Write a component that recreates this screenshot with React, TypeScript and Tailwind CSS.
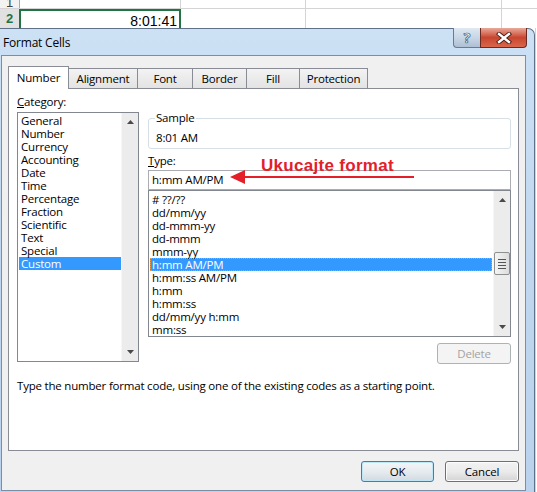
import React from "react";

const categories = [
  "General",
  "Number",
  "Currency",
  "Accounting",
  "Date",
  "Time",
  "Percentage",
  "Fraction",
  "Scientific",
  "Text",
  "Special",
  "Custom",
];

const formats = [
  "# ??/??",
  "dd/mm/yy",
  "dd-mmm-yy",
  "dd-mmm",
  "mmm-yy",
  "h:mm AM/PM",
  "h:mm:ss AM/PM",
  "h:mm",
  "h:mm:ss",
  "dd/mm/yy h:mm",
  "mm:ss",
];

const tabs = [
  { label: "Number", w: "w-[61px]" },
  { label: "Alignment", w: "w-[69px]" },
  { label: "Font", w: "w-[55px]" },
  { label: "Border", w: "w-[54px]" },
  { label: "Fill", w: "w-[53px]" },
  { label: "Protection", w: "w-[68px]" },
];

function Arrow({ down }: { down?: boolean }) {
  return (
    <svg width="7" height="4" viewBox="0 0 7 4">
      <polygon points={down ? "0,0 7,0 3.5,4" : "0,4 7,4 3.5,0"} fill="#4a4a4a" />
    </svg>
  );
}

function ScrollBar({ thumb }: { thumb?: boolean }) {
  return (
    <div className="relative w-[17px] h-full shrink-0 bg-[#ececec] border-l border-[#f6f6f6] flex flex-col items-center justify-between pt-[7px] pb-[7px]">
      <Arrow />
      <Arrow down />
      {thumb && (
        <div className="absolute left-0 right-0 top-[61px] h-[23px] rounded-[2px] border border-[#8e8f8f] bg-gradient-to-r from-[#f5f5f5] to-[#dcdcdc] flex flex-col items-center justify-center gap-[2px]">
          <div className="w-[8px] h-[1px] bg-[#555]" />
          <div className="w-[8px] h-[1px] bg-[#555]" />
          <div className="w-[8px] h-[1px] bg-[#555]" />
          <div className="w-[8px] h-[1px] bg-[#555]" />
        </div>
      )}
    </div>
  );
}

function ExcelStrip() {
  return (
    <div className="h-[28px] shrink-0 font-['Liberation_Sans',sans-serif] text-[#222] tracking-normal">
      {/* row 1 */}
      <div className="flex h-[9px] border-b border-[#d4d4d4]">
        <div className="w-[20px] bg-[#f3f3f3] border-r border-[#ababab] flex items-end justify-center overflow-hidden">
          <span className="text-[13px] leading-[13px] -mb-[1px] text-[#444]">1</span>
        </div>
        <div className="w-[161px] border-r border-[#d4d4d4]" />
        <div className="w-[125px] border-r border-[#d4d4d4]" />
        <div className="w-[196px] border-r border-[#d4d4d4]" />
        <div className="flex-1" />
      </div>
      {/* row 2 */}
      <div className="flex h-[19px]">
        <div className="w-[20px] bg-[#e1e1e1] border-r border-[#ababab] flex items-center justify-center">
          <span className="text-[13px] font-bold text-[#217346]">2</span>
        </div>
        <div className="w-[162px] -ml-[1px] border-2 border-b-0 border-[#217346] flex items-center justify-end pr-[2px] pt-[2px]">
          <span className="text-[14px] leading-[16px] text-black">8:01:41</span>
        </div>
        <div className="w-[125px] border-r border-[#d4d4d4]" />
        <div className="w-[196px] border-r border-[#d4d4d4]" />
        <div className="flex-1" />
      </div>
    </div>
  );
}

function TitleBar() {
  return (
    <div className="h-[26px] flex justify-between items-start">
      <span className="pl-[3px] pt-[6px] text-[12px] leading-[16px] text-black">Format Cells</span>
      <div className="flex mr-[7px] -mt-[1px]">
        <div className="w-[27px] h-[20px] rounded-bl-[4px] border border-r-0 border-t-0 border-[#6a7a91] bg-gradient-to-b from-[#dfe8f2] via-[#c9d6e6] to-[#aebfd5] flex items-center justify-center">
          <span className="text-white font-bold text-[14px] leading-[14px] [-webkit-text-stroke:0.7px_#3b4a60]">?</span>
        </div>
        <div className="w-[47px] h-[20px] rounded-br-[4px] border border-t-0 border-[#6a2a22] bg-gradient-to-b from-[#e9a899] via-[#c8452f] to-[#d9664c] flex items-center justify-center">
          <svg width="16" height="12" viewBox="0 0 16 12">
            <path d="M3 2 L13 10 M13 2 L3 10" stroke="#4a1a14" strokeWidth="4.2" strokeLinecap="square" />
            <path d="M3 2 L13 10 M13 2 L3 10" stroke="#ffffff" strokeWidth="2.4" strokeLinecap="square" />
          </svg>
        </div>
      </div>
    </div>
  );
}

export default function App() {
  return (
    <div className="w-[537px] h-[492px] overflow-hidden bg-white flex flex-col font-['Open_Sans','Noto_Sans',sans-serif] text-[11.5px] tracking-[-0.2px] text-black">
      <ExcelStrip />

      <div className="flex flex-1">
        {/* dialog window */}
        <div className="w-[535px] h-[464px] rounded-tr-[7px] border-t border-r border-[#5f7089] bg-gradient-to-b from-[#cde1f5] via-[#c0d7ef] to-[#bad2ec] flex flex-col">
          <TitleBar />

          {/* client area */}
          <div className="ml-[1px] w-[525px] h-[436px] border border-[#7d8da3] bg-[#f0f0f0] pt-[10px] px-[6px]">
            {/* tabs */}
            <div className="flex items-end h-[22px]">
              {tabs.map((t, i) =>
                i === 0 ? (
                  <div
                    key={t.label}
                    className={`${t.w} h-[23px] -mb-[1px] relative z-10 bg-white border border-b-0 border-[#898c95] flex items-center justify-center leading-[16px]`}
                  >
                    {t.label}
                  </div>
                ) : (
                  <div
                    key={t.label}
                    className={`${t.w} h-[20px] border-t border-r border-[#898c95] bg-gradient-to-b from-[#f3f3f3] to-[#e3e3e3] flex items-center justify-center leading-[16px] pt-[1px]`}
                  >
                    {t.label}
                  </div>
                )
              )}
            </div>

            {/* tab panel */}
            <div className="w-[511px] h-[363px] border border-[#898c95] bg-white pt-[5px] pl-[8px] pr-[7px]">
              <div className="flex gap-[9px] items-start">
                {/* category */}
                <div className="w-[122px] flex flex-col">
                  <span className="leading-[16px]">
                    <span className="underline">C</span>ategory:
                  </span>
                  <div className="mt-[2px] h-[250px] border border-[#828790] flex">
                    <div className="flex-1 pt-[1px]">
                      {categories.map((c) => (
                        <div
                          key={c}
                          className={`h-[13px] leading-[13px] ml-[1px] pl-[2px] whitespace-nowrap ${
                            c === "Custom" ? "bg-[#3399ff] text-white" : ""
                          }`}
                        >
                          {c}
                        </div>
                      ))}
                    </div>
                    <ScrollBar />
                  </div>
                </div>

                {/* right column */}
                <div className="w-[363px] flex flex-col pt-[16px]">
                  <fieldset className="h-[39px] rounded-[3px] border border-[#d5dfe5] pl-[7px]">
                    <legend className="leading-[16px] px-[1px] -ml-[1px]">Sample</legend>
                    <div className="leading-[16px] pt-[4px]">8:01 AM</div>
                  </fieldset>

                  <div className="relative">
                    <div className="mt-[4px] leading-[16px]">
                      <span className="underline">T</span>ype:
                    </div>
                    <div className="mt-[1px] h-[20px] border border-[#abadb3] pl-[3px] leading-[18px]">h:mm AM/PM</div>

                    {/* annotation */}
                    <span className="absolute left-[113px] top-[7px] font-['Liberation_Sans',sans-serif] font-bold text-[17px] leading-[20px] tracking-[0.3px] text-[#e3202a]">
                      Ukucajte format
                    </span>
                    <svg className="absolute left-[82px] top-[20px]" width="184" height="16" viewBox="0 0 184 16">
                      <polygon points="0,8 15,1 15,15" fill="#e3202a" />
                      <rect x="12" y="7" width="172" height="2" fill="#e3202a" />
                    </svg>
                  </div>

                  <div className="h-[147px] border border-[#828790] flex overflow-hidden">
                    <div className="flex-1 pt-[2px] overflow-hidden">
                      {formats.map((f) => (
                        <div
                          key={f}
                          className={`h-[13px] leading-[13px] mx-[1px] pl-[2px] whitespace-nowrap ${
                            f === "h:mm AM/PM"
                              ? "bg-[#3399ff] text-white outline outline-1 outline-dotted outline-[#e89a4c] -outline-offset-1"
                              : ""
                          }`}
                        >
                          {f}
                        </div>
                      ))}
                    </div>
                    <ScrollBar thumb />
                  </div>

                  <button className="self-end mt-[6px] w-[74px] h-[21px] rounded-[3px] border border-[#adb2b5] bg-[#f4f4f4] text-[#a3a3a3] leading-[16px]">
                    Delete
                  </button>
                </div>
              </div>

              <p className="mt-[14px] leading-[16px]">
                Type the number format code, using one of the existing codes as a starting point.
              </p>
            </div>

            {/* buttons */}
            <div className="w-[511px] mt-[10px] flex justify-end gap-[11px]">
              <button className="w-[73px] h-[21px] rounded-[3px] border border-[#3c7fb1] bg-gradient-to-b from-[#f3f6f8] via-[#e6ebef] to-[#d2dbe2] shadow-[inset_0_0_0_1px_#bfe6f7] leading-[16px]">
                OK
              </button>
              <button className="w-[74px] h-[21px] rounded-[3px] border border-[#707070] bg-gradient-to-b from-[#f2f2f2] via-[#ebebeb] to-[#d4d4d4] shadow-[inset_0_0_0_1px_#fcfcfc] leading-[16px]">
                Cancel
              </button>
            </div>
          </div>
        </div>
        <div className="flex-1 bg-white border-l border-[#d4d4d4]" />
      </div>
    </div>
  );
}
